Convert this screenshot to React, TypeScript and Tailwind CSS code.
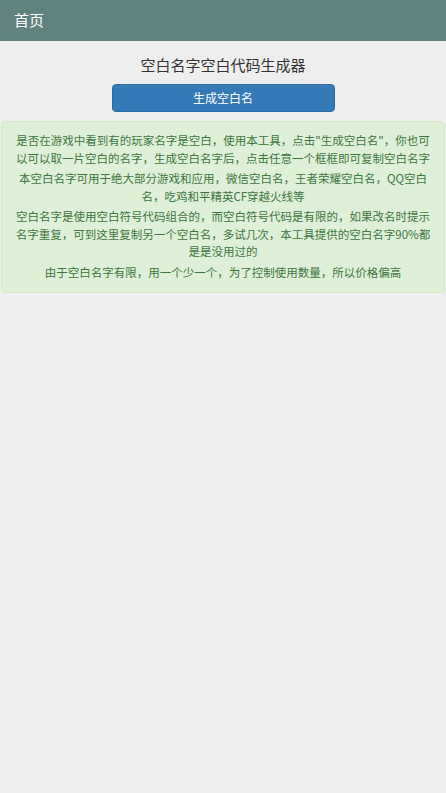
export default function App() {
  const font = { fontFamily: '"Noto Sans CJK SC", "Noto Sans", sans-serif' };

  return (
    <div className="min-h-[793px] bg-[#eeeeee]" style={font}>
      {/* Header */}
      <div className="h-[41px] bg-[#5f8480] flex items-center px-[14px]">
        <span className="text-[15px] text-white">首页</span>
      </div>

      {/* Title + button */}
      <div className="flex flex-col items-center pt-[14px]">
        <h1 className="text-[15px] leading-[20px] text-[#333333]">空白名字空白代码生成器</h1>
        <button className="mt-[9px] w-[223px] h-[28px] rounded-[4px] bg-[#337ab7] text-white text-[12px] border border-[#2e6da4]">
          生成空白名
        </button>
      </div>

      {/* Notice */}
      <div className="mx-[1px] mt-[9px] rounded-[4px] border border-[#d6e9c6] bg-[#dff0d8] px-[12px] pt-[10px] pb-[8px] text-center text-[11.5px] leading-[17.5px] text-[#3c763d]">
        <p className="mb-[3px]">
          是否在游戏中看到有的玩家名字是空白，使用本工具，点击"生成空白名"，你也可以可以取一片空白的名字，生成空白名字后，点击任意一个框框即可复制空白名字
        </p>
        <p className="mb-[3px]">
          本空白名字可用于绝大部分游戏和应用，微信空白名，王者荣耀空白名，QQ空白名，吃鸡和平精英CF穿越火线等
        </p>
        <p className="mb-[3px]">
          空白名字是使用空白符号代码组合的，而空白符号代码是有限的，如果改名时提示名字重复，可到这里复制另一个空白名，多试几次，本工具提供的空白名字90%都是是没用过的
        </p>
        <p className="mb-[3px]">由于空白名字有限，用一个少一个，为了控制使用数量，所以价格偏高</p>
      </div>
    </div>
  );
}
